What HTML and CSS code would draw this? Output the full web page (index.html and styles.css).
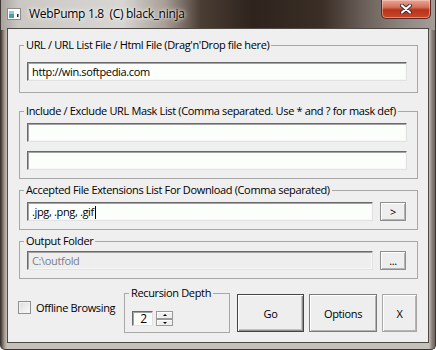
FILE: index.html
```html
<!DOCTYPE html>
<html lang="en">
<head>
    <meta charset="UTF-8">
    <meta name="viewport" content="width=device-width, initial-scale=1.0">
    <title>WebPump 1.8</title>
    <link rel="stylesheet" href="styles.css">
</head>
<body>
    <div class="window">
        <div class="titlebar">
            <svg class="app-icon" width="14" height="12" viewBox="0 0 14 12">
                <rect x="0.5" y="0.5" width="13" height="11" fill="#fdfdfd" stroke="#8a8a8a"/>
                <rect x="2" y="3" width="5" height="7" fill="#4f9ab0"/>
                <rect x="2" y="3" width="5" height="3" fill="#8fd0c8"/>
                <rect x="10" y="6" width="1.5" height="3" fill="#222"/>
            </svg>
            <span class="title">WebPump 1.8&nbsp; (C) black_ninja</span>
            <div class="close">
                <svg width="12" height="10" viewBox="0 0 12 10">
                    <path d="M2 1.5 L10 8.5 M10 1.5 L2 8.5" stroke="#3a2a30" stroke-width="4" stroke-linecap="round"/>
                    <path d="M2 1.5 L10 8.5 M10 1.5 L2 8.5" stroke="#ffffff" stroke-width="2.2" stroke-linecap="round"/>
                </svg>
            </div>
        </div>

        <div class="client">
            <fieldset class="group url-group">
                <legend>URL / URL List File / Html File (Drag'n'Drop file here)</legend>
                <div class="edit">http://win.softpedia.com</div>
            </fieldset>

            <fieldset class="group mask-group">
                <legend>Include / Exclude URL Mask List (Comma separated. Use * and ? for mask def)</legend>
                <div class="edit"></div>
                <div class="edit"></div>
            </fieldset>

            <fieldset class="group ext-group">
                <legend>Accepted File Extensions List For Download (Comma separated)</legend>
                <div class="row">
                    <div class="edit">.jpg, .png, .gif<span class="caret"></span></div>
                    <button class="btn small">&gt;</button>
                </div>
            </fieldset>

            <fieldset class="group out-group">
                <legend>Output Folder</legend>
                <div class="row">
                    <div class="edit disabled">C:\outfold</div>
                    <button class="btn small">...</button>
                </div>
            </fieldset>

            <div class="bottom-row">
                <label class="check"><span class="box"></span>Offline Browsing</label>

                <fieldset class="group depth">
                    <legend>Recursion Depth</legend>
                    <div class="spin">
                        <div class="spin-value">2</div>
                        <div class="spin-buttons">
                            <span class="spin-btn up"></span>
                            <span class="spin-btn down"></span>
                        </div>
                    </div>
                </fieldset>

                <button class="btn big go">Go</button>
                <button class="btn big options">Options</button>
                <button class="btn big quit">X</button>
            </div>
        </div>
    </div>
</body>
</html>
```

FILE: styles.css
```css
body {
    margin: 0;
    background: #ffffff;
    font-family: "Open Sans", "Noto Sans", sans-serif;
    font-size: 11px;
    letter-spacing: -0.35px;
    color: #000;
}

.window {
    width: 436px;
    height: 350px;
    box-sizing: border-box;
    display: flex;
    flex-direction: column;
    border: 1px solid #3e3632;
    border-top: none;
    border-radius: 0 0 5px 5px;
    background:
        linear-gradient(90deg, #a8a29c 0%, #cbc8c4 4%, #d8d6d3 28%, #a69c94 38%, #4a3d34 46%, #2e241d 58%, #3a2e26 74%, #6c625b 84%, #8f8781 93%, #a59e98 100%) 0 0 / 100% 30px no-repeat,
        linear-gradient(90deg, #4a3c34 0, #9a9088 3px, #c6c0ba 6px, #c6c0ba 428px, #8a807a 431px, #6e645e 100%);
}

/* title bar */

.window .titlebar {
    height: 28px;
    display: flex;
    align-items: flex-start;
    flex-shrink: 0;
}

.window .titlebar .app-icon {
    margin: 8px 0 0 6px;
}

.window .titlebar .title {
    margin: 6px 0 0 8px;
    font-size: 12px;
    line-height: 16px;
    letter-spacing: -0.3px;
    color: #000;
    text-shadow: 0 0 6px #fff, 0 0 3px #fff;
}

.window .titlebar .close {
    margin-left: auto;
    margin-right: 4px;
    width: 50px;
    height: 19px;
    box-sizing: border-box;
    border: 1px solid #5a2a22;
    border-top: none;
    border-radius: 0 0 5px 5px;
    background: linear-gradient(180deg, #e9a796 0%, #d4705a 40%, #b8321a 55%, #c9482c 100%);
    box-shadow: inset 0 0 0 1px rgba(255, 220, 210, .45);
    display: flex;
    justify-content: center;
    align-items: center;
}

/* client area */

.window .client {
    flex: 1;
    margin: 0 6px 6px 6px;
    border: 1px solid #4c4846;
    background: #efefef;
    padding: 9px 10px 0 11px;
    display: flex;
    flex-direction: column;
}

.group {
    margin: 0;
    border: 1px solid #a8a8a8;
    padding: 0 10px 0 7px;
    min-width: 0;
    display: flex;
    flex-direction: column;
}

.group legend {
    padding: 0 2px;
    margin-left: -3px;
    line-height: 14px;
    white-space: nowrap;
}

.group > .edit {
    flex: none;
}

.url-group {
    padding-top: 10px;
    padding-bottom: 11px;
}

.mask-group {
    margin-top: 11px;
    padding-top: 5px;
    padding-bottom: 8px;
    gap: 9px;
}

.ext-group {
    margin-top: 4px;
    padding-top: 5px;
    padding-bottom: 8px;
    padding-right: 11px;
}

.out-group {
    margin-top: 4px;
    padding-top: 3px;
    padding-bottom: 8px;
    padding-right: 11px;
}

.group .row {
    display: flex;
    gap: 7px;
}

.edit {
    flex: 1;
    height: 19px;
    box-sizing: border-box;
    border: 1px solid;
    border-color: #6a6a6a #e2e2e2 #e2e2e2 #6a6a6a;
    box-shadow: inset 1px 1px 0 #a3a3a3, inset -1px -1px 0 #f7f7f7;
    background: #fcfefc;
    padding: 0 4px;
    line-height: 17px;
    white-space: nowrap;
    overflow: hidden;
}

.edit.disabled {
    background: #eeeeee;
    color: #77808c;
}

.edit .caret {
    display: inline-block;
    width: 0;
    height: 13px;
    margin-left: 1px;
    border-left: 1px solid #000;
    vertical-align: -3px;
}

/* buttons */

.btn {
    box-sizing: border-box;
    margin: 0;
    padding: 0;
    border: 1px solid #8e8e8e;
    background: #eeeeee;
    box-shadow: inset 1px 1px 0 #ffffff, inset -1px -1px 0 #b4b4b4;
    font-family: "Open Sans", "Noto Sans", sans-serif;
    font-size: 11px;
    letter-spacing: -0.35px;
    color: #000;
}

.btn.small {
    width: 26px;
    height: 19px;
    line-height: 15px;
}

.btn.big {
    height: 38px;
    margin-top: 8px;
}

.btn.go {
    width: 67px;
    margin-left: 7px;
    border-color: #454545;
    box-shadow: inset 1px 1px 0 #ffffff, inset -1px -1px 0 #8c8c8c, inset -2px -2px 0 #c4c4c4;
}

.btn.options {
    width: 68px;
    margin-left: 5px;
    border-color: #7a7a7a;
}

.btn.quit {
    width: 35px;
    margin-left: 5px;
    border-color: #a6a6a6;
}

/* bottom row */

.bottom-row {
    margin-top: 7px;
    display: flex;
    align-items: flex-start;
}

.check {
    width: 105px;
    margin-top: 15px;
    display: flex;
    align-items: center;
    gap: 5px;
    line-height: 13px;
}

.check .box {
    width: 13px;
    height: 13px;
    box-sizing: border-box;
    margin-left: -1px;
    border: 1px solid #8e8f8f;
    background: linear-gradient(135deg, #dcdcdc, #fbfbfb);
    box-shadow: inset 0 0 0 1px #f2f2f2;
}

.group.depth {
    width: 106px;
    box-sizing: border-box;
    padding: 11px 0 6px 7px;
}

.spin {
    display: flex;
    gap: 3px;
}

.spin-value {
    width: 21px;
    height: 15px;
    box-sizing: border-box;
    border: 1px solid;
    border-color: #6a6a6a #e2e2e2 #e2e2e2 #6a6a6a;
    box-shadow: inset 1px 1px 0 #a3a3a3;
    background: #fcfefc;
    font-size: 12px;
    line-height: 13px;
    text-align: center;
    padding-left: 2px;
}

.spin-buttons {
    display: flex;
    flex-direction: column;
}

.spin-btn {
    width: 17px;
    height: 7px;
    box-sizing: border-box;
    border: 1px solid #9a9a9a;
    background: #efefef;
    box-shadow: inset 1px 1px 0 #fff;
    display: flex;
    justify-content: center;
    align-items: center;
}

.spin-btn.up {
    height: 8px;
}

.spin-btn::after {
    content: "";
    border-left: 2px solid transparent;
    border-right: 2px solid transparent;
}

.spin-btn.up::after {
    border-bottom: 2px solid #000;
}

.spin-btn.down::after {
    border-top: 2px solid #000;
}
```
